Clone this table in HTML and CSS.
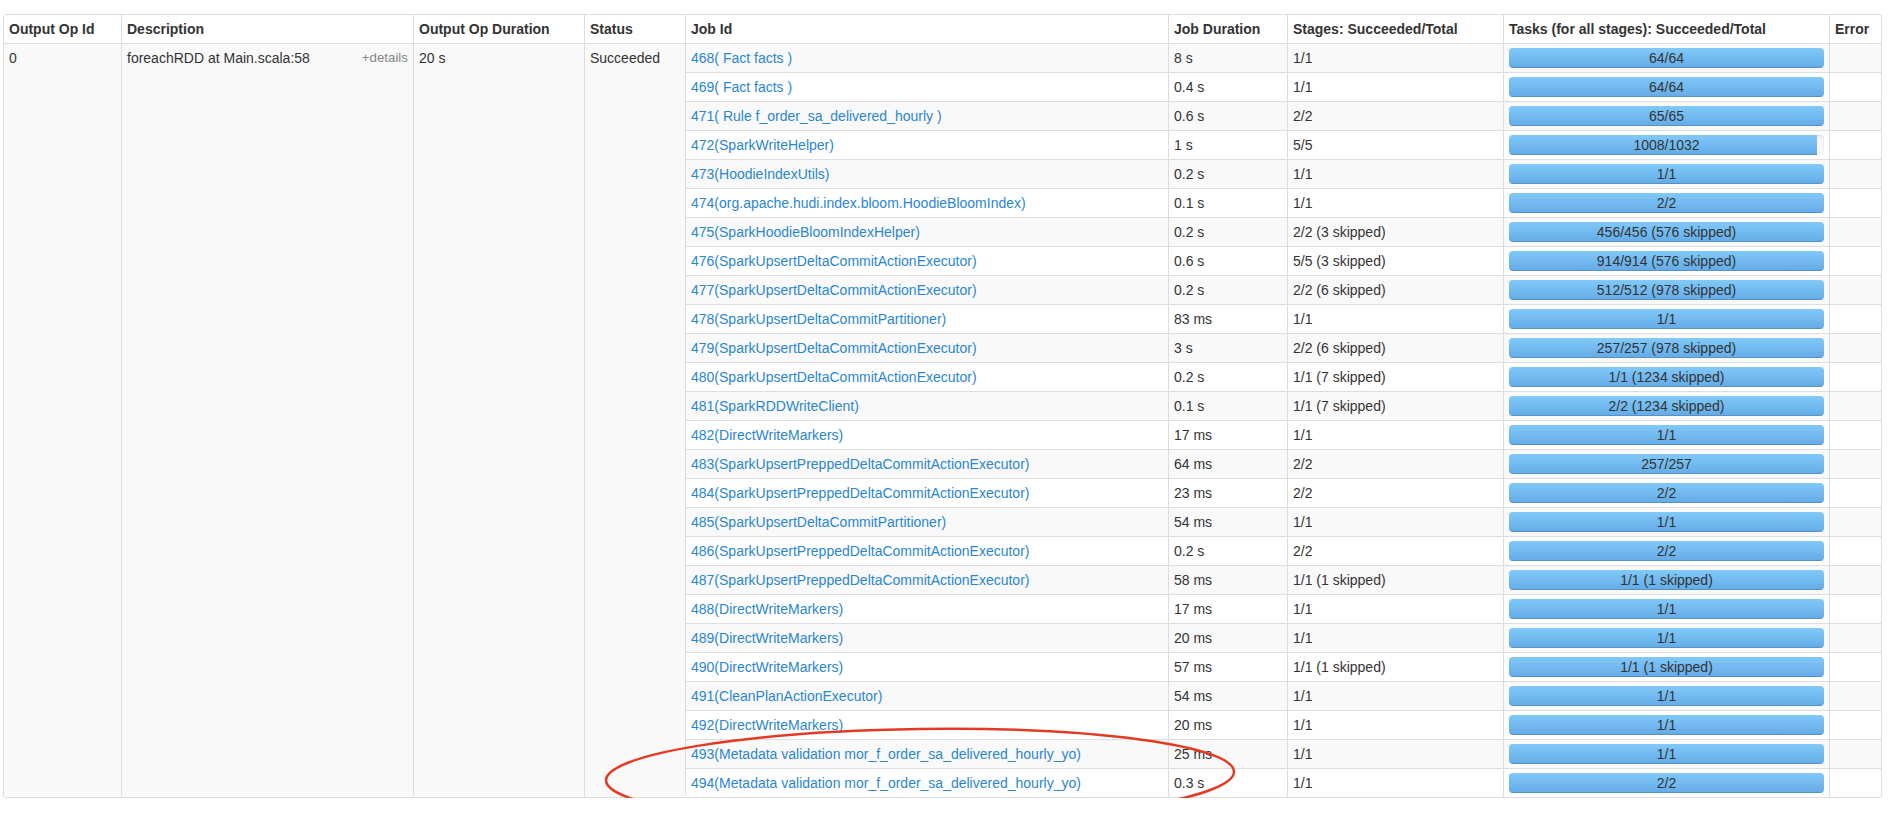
FILE: index.html
```html
<!DOCTYPE html>
<html>
<head>
<meta charset="utf-8">
<link rel="stylesheet" href="styles.css">
</head>
<body>
<div class="page">
<table class="table">
<thead>
<tr>
<th class="c-op">Output Op Id</th>
<th class="c-desc">Description</th>
<th class="c-dur">Output Op Duration</th>
<th class="c-status">Status</th>
<th class="c-job">Job Id</th>
<th class="c-jdur">Job Duration</th>
<th class="c-stages">Stages: Succeeded/Total</th>
<th class="c-tasks">Tasks (for all stages): Succeeded/Total</th>
<th class="c-err">Error</th>
</tr>
</thead>
<tbody>
<tr>
<td rowspan="26">0</td>
<td rowspan="26"><span class="details">+details</span>foreachRDD at Main.scala:58</td>
<td rowspan="26">20 s</td>
<td rowspan="26">Succeeded</td>
<td><a href="#">468( Fact facts )</a></td><td>8 s</td><td>1/1</td>
<td><div class="progress"><span class="ptext">64/64</span><div class="bar" style="width:100%"></div></div></td><td></td>
</tr>
<tr><td><a href="#">469( Fact facts )</a></td><td>0.4 s</td><td>1/1</td><td><div class="progress"><span class="ptext">64/64</span><div class="bar" style="width:100%"></div></div></td><td></td></tr>
<tr><td><a href="#">471( Rule f_order_sa_delivered_hourly )</a></td><td>0.6 s</td><td>2/2</td><td><div class="progress"><span class="ptext">65/65</span><div class="bar" style="width:100%"></div></div></td><td></td></tr>
<tr><td><a href="#">472(SparkWriteHelper)</a></td><td>1 s</td><td>5/5</td><td><div class="progress"><span class="ptext">1008/1032</span><div class="bar" style="width:97.67%"></div></div></td><td></td></tr>
<tr><td><a href="#">473(HoodieIndexUtils)</a></td><td>0.2 s</td><td>1/1</td><td><div class="progress"><span class="ptext">1/1</span><div class="bar" style="width:100%"></div></div></td><td></td></tr>
<tr><td><a href="#">474(org.apache.hudi.index.bloom.HoodieBloomIndex)</a></td><td>0.1 s</td><td>1/1</td><td><div class="progress"><span class="ptext">2/2</span><div class="bar" style="width:100%"></div></div></td><td></td></tr>
<tr><td><a href="#">475(SparkHoodieBloomIndexHelper)</a></td><td>0.2 s</td><td>2/2 (3 skipped)</td><td><div class="progress"><span class="ptext">456/456 (576 skipped)</span><div class="bar" style="width:100%"></div></div></td><td></td></tr>
<tr><td><a href="#">476(SparkUpsertDeltaCommitActionExecutor)</a></td><td>0.6 s</td><td>5/5 (3 skipped)</td><td><div class="progress"><span class="ptext">914/914 (576 skipped)</span><div class="bar" style="width:100%"></div></div></td><td></td></tr>
<tr><td><a href="#">477(SparkUpsertDeltaCommitActionExecutor)</a></td><td>0.2 s</td><td>2/2 (6 skipped)</td><td><div class="progress"><span class="ptext">512/512 (978 skipped)</span><div class="bar" style="width:100%"></div></div></td><td></td></tr>
<tr><td><a href="#">478(SparkUpsertDeltaCommitPartitioner)</a></td><td>83 ms</td><td>1/1</td><td><div class="progress"><span class="ptext">1/1</span><div class="bar" style="width:100%"></div></div></td><td></td></tr>
<tr><td><a href="#">479(SparkUpsertDeltaCommitActionExecutor)</a></td><td>3 s</td><td>2/2 (6 skipped)</td><td><div class="progress"><span class="ptext">257/257 (978 skipped)</span><div class="bar" style="width:100%"></div></div></td><td></td></tr>
<tr><td><a href="#">480(SparkUpsertDeltaCommitActionExecutor)</a></td><td>0.2 s</td><td>1/1 (7 skipped)</td><td><div class="progress"><span class="ptext">1/1 (1234 skipped)</span><div class="bar" style="width:100%"></div></div></td><td></td></tr>
<tr><td><a href="#">481(SparkRDDWriteClient)</a></td><td>0.1 s</td><td>1/1 (7 skipped)</td><td><div class="progress"><span class="ptext">2/2 (1234 skipped)</span><div class="bar" style="width:100%"></div></div></td><td></td></tr>
<tr><td><a href="#">482(DirectWriteMarkers)</a></td><td>17 ms</td><td>1/1</td><td><div class="progress"><span class="ptext">1/1</span><div class="bar" style="width:100%"></div></div></td><td></td></tr>
<tr><td><a href="#">483(SparkUpsertPreppedDeltaCommitActionExecutor)</a></td><td>64 ms</td><td>2/2</td><td><div class="progress"><span class="ptext">257/257</span><div class="bar" style="width:100%"></div></div></td><td></td></tr>
<tr><td><a href="#">484(SparkUpsertPreppedDeltaCommitActionExecutor)</a></td><td>23 ms</td><td>2/2</td><td><div class="progress"><span class="ptext">2/2</span><div class="bar" style="width:100%"></div></div></td><td></td></tr>
<tr><td><a href="#">485(SparkUpsertDeltaCommitPartitioner)</a></td><td>54 ms</td><td>1/1</td><td><div class="progress"><span class="ptext">1/1</span><div class="bar" style="width:100%"></div></div></td><td></td></tr>
<tr><td><a href="#">486(SparkUpsertPreppedDeltaCommitActionExecutor)</a></td><td>0.2 s</td><td>2/2</td><td><div class="progress"><span class="ptext">2/2</span><div class="bar" style="width:100%"></div></div></td><td></td></tr>
<tr><td><a href="#">487(SparkUpsertPreppedDeltaCommitActionExecutor)</a></td><td>58 ms</td><td>1/1 (1 skipped)</td><td><div class="progress"><span class="ptext">1/1 (1 skipped)</span><div class="bar" style="width:100%"></div></div></td><td></td></tr>
<tr><td><a href="#">488(DirectWriteMarkers)</a></td><td>17 ms</td><td>1/1</td><td><div class="progress"><span class="ptext">1/1</span><div class="bar" style="width:100%"></div></div></td><td></td></tr>
<tr><td><a href="#">489(DirectWriteMarkers)</a></td><td>20 ms</td><td>1/1</td><td><div class="progress"><span class="ptext">1/1</span><div class="bar" style="width:100%"></div></div></td><td></td></tr>
<tr><td><a href="#">490(DirectWriteMarkers)</a></td><td>57 ms</td><td>1/1 (1 skipped)</td><td><div class="progress"><span class="ptext">1/1 (1 skipped)</span><div class="bar" style="width:100%"></div></div></td><td></td></tr>
<tr><td><a href="#">491(CleanPlanActionExecutor)</a></td><td>54 ms</td><td>1/1</td><td><div class="progress"><span class="ptext">1/1</span><div class="bar" style="width:100%"></div></div></td><td></td></tr>
<tr><td><a href="#">492(DirectWriteMarkers)</a></td><td>20 ms</td><td>1/1</td><td><div class="progress"><span class="ptext">1/1</span><div class="bar" style="width:100%"></div></div></td><td></td></tr>
<tr><td><a href="#">493(Metadata validation mor_f_order_sa_delivered_hourly_yo)</a></td><td>25 ms</td><td>1/1</td><td><div class="progress"><span class="ptext">1/1</span><div class="bar" style="width:100%"></div></div></td><td></td></tr>
<tr class="last"><td class="first-in-last"><a href="#">494(Metadata validation mor_f_order_sa_delivered_hourly_yo)</a></td><td>0.3 s</td><td>1/1</td><td><div class="progress"><span class="ptext">2/2</span><div class="bar" style="width:100%"></div></div></td><td class="last-in-last"></td></tr>
</tbody>
</table>
<svg class="annotation" width="700" height="130" viewBox="0 0 700 130">
<ellipse cx="315" cy="56" rx="314" ry="47" transform="rotate(-0.8 315 56)" fill="none" stroke="#e33a25" stroke-width="2.5"/>
</svg>
</div>
</body>
</html>
```

FILE: styles.css
```css
html, body {
  margin: 0;
  padding: 0;
  background: #fff;
}
body {
  font-family: "Liberation Sans", Arial, Helvetica, sans-serif;
  font-size: 14px;
  line-height: 20px;
  color: #333;
}
.page {
  position: relative;
  padding: 14px 20px 0 3px;
}
.table {
  width: 100%;
  table-layout: fixed;
  border-collapse: separate;
  border-spacing: 0;
  border: 1px solid #ddd;
  border-left: 0;
  border-radius: 4px;
}
.table th,
.table td {
  box-sizing: border-box;
  padding: 4px 5px;
  line-height: 20px;
  text-align: left;
  vertical-align: top;
  border-left: 1px solid #ddd;
  border-top: 1px solid #ddd;
  overflow: hidden;
  white-space: nowrap;
}
.table th {
  font-weight: bold;
  vertical-align: bottom;
  border-top: 0;
  background: #fff;
}
.table thead th:first-child { border-top-left-radius: 4px; }
.table thead th:last-child { border-top-right-radius: 4px; }
.table tbody tr:nth-child(odd) td { background-color: #f9f9f9; }
.table tbody tr:nth-child(even) td { background-color: #fff; }
.table .first-in-last { border-bottom-left-radius: 4px; }
.table .last-in-last { border-bottom-right-radius: 4px; }

.c-op { width: 118px; }
.c-desc { width: 292px; }
.c-dur { width: 171px; }
.c-status { width: 101px; }
.c-job { width: 483px; }
.c-jdur { width: 119px; }
.c-stages { width: 216px; }
.c-tasks { width: 326px; }
.c-err { width: 52px; }

a {
  color: #2a86d1;
  text-decoration: none;
}
.details {
  float: right;
  font-size: 13.33px;
  color: #888;
}

.progress {
  position: relative;
  height: 20px;
  border-radius: 4px;
  overflow: hidden;
  background: linear-gradient(#f5f5f5, #f9f9f9);
  box-shadow: inset 0 1px 2px rgba(0, 0, 0, 0.1);
  text-align: center;
}
.progress .bar {
  height: 100%;
  background: linear-gradient(#80c9f8, #64abe7);
  box-shadow: inset 0 -1px 0 rgba(0, 0, 0, 0.15);
}
.progress .ptext {
  position: absolute;
  left: 0;
  top: 0;
  width: 100%;
  line-height: 20px;
  color: #333;
  z-index: 1;
}

.annotation {
  position: absolute;
  left: 605px;
  top: 720px;
  overflow: visible;
  pointer-events: none;
}
```
